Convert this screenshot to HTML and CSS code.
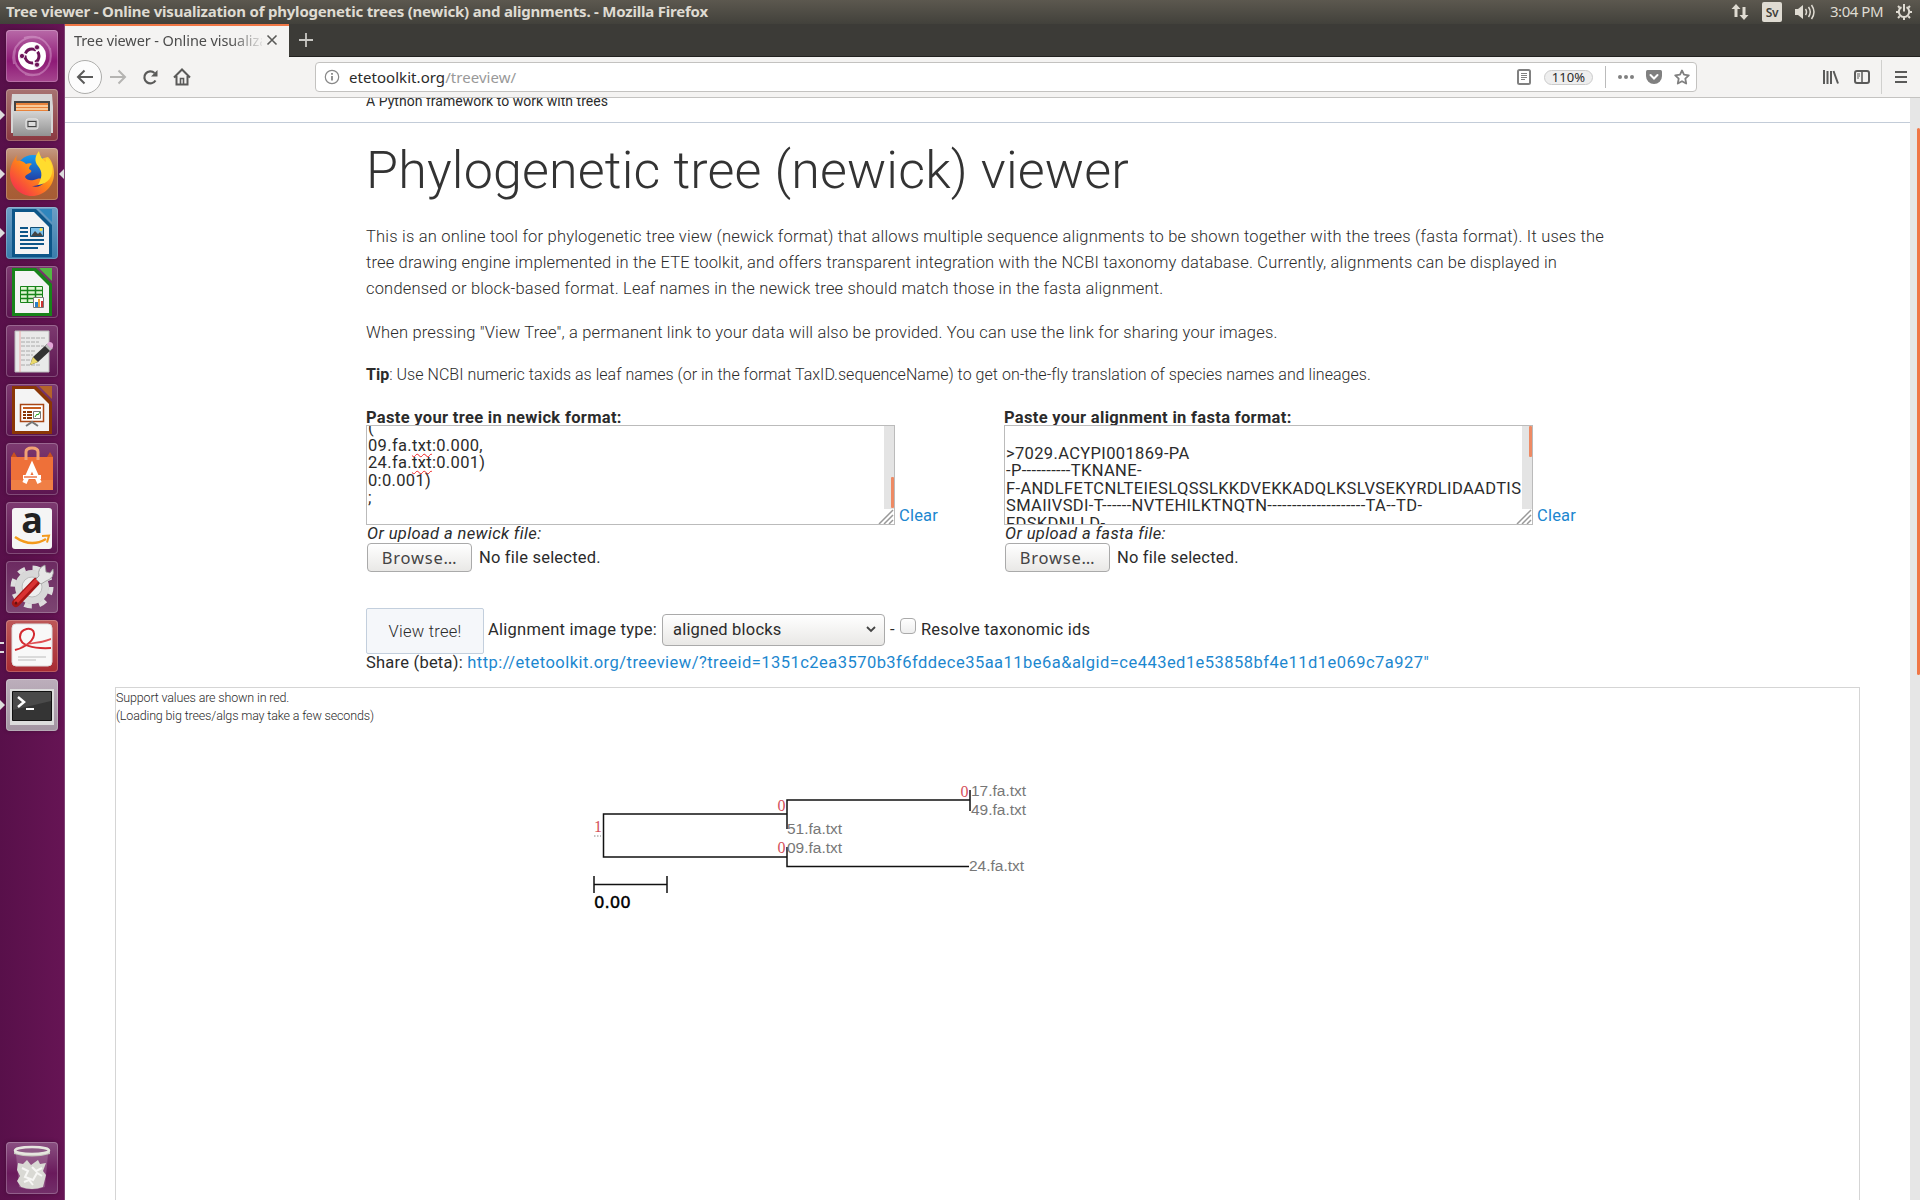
FILE: index.html
```html
<!DOCTYPE html>
<html lang="en">
<head>
<meta charset="utf-8">
<title>Tree viewer - Online visualization of phylogenetic trees (newick) and alignments.</title>
<link rel="stylesheet" href="styles.css">
</head>
<body>
<header class="panel">
  <span class="panel-title">Tree viewer - Online visualization of phylogenetic trees (newick) and alignments. - Mozilla Firefox</span>
  <div class="indicators">
    <svg class="net" width="18" height="18" viewBox="0 0 18 18"><path d="M5 1 9.500 6H6.500v8h-3V6H.5zM13 17 8.500 12h3V4h3v8h3z" fill="#dfdbd2"/></svg>
    <span class="kbd">Sv</span>
    <svg class="vol" width="20" height="18" viewBox="0 0 20 18"><path d="M0 6h3l5-4v14l-5-4H0z" fill="#dfdbd2"/><path d="M10.500 6q2 3 0 6M13.500 4q3.500 5 0 10M16.500 2q5 7 0 14" fill="none" stroke="#dfdbd2" stroke-width="1.500"/></svg>
    <span class="clock">3:04 PM</span>
    <svg class="gear" width="16" height="18" viewBox="0 0 16 18"><path d="M5.500 4.200a5.200 5.200 0 1 0 5 0" fill="none" stroke="#dfdbd2" stroke-width="2"/><path d="M8 1v7.500" stroke="#dfdbd2" stroke-width="2"/><path d="M3.700 4.700 2 3M12.300 4.700 14 3M2.500 9H0M16 9h-2.500M3.700 13.300 2 15M12.300 13.300 14 15M8 14.500V17" stroke="#dfdbd2" stroke-width="2"/></svg>
  </div>
</header>
<div class="desktop">
  <nav class="launcher">
    <div class="tile dash"><svg viewBox="0 0 52 52"><g fill="none" stroke="#e8bfe0" stroke-opacity=".4" stroke-width="2"><path d="M8 34C4 16 18 4 34 8M44 18c4 18-8 31-25 26M18 8c18-5 30 8 26 24M34 44C18 48 5 36 9 20"/></g><circle cx="26" cy="26" r="14" fill="#fff"/><circle cx="26" cy="26" r="7" fill="none" stroke="#6d1459" stroke-width="3" stroke-dasharray="12.700 2" stroke-dashoffset="5"/><g fill="#6d1459" stroke="#fff" stroke-width=".8"><circle cx="16" cy="26" r="2.600"/><circle cx="31" cy="17.300" r="2.600"/><circle cx="31" cy="34.700" r="2.600"/></g></svg></div>
    <div class="tile files run"><svg viewBox="0 0 52 52"><defs><linearGradient id="cab" x2="0" y2="1"><stop stop-color="#d4d4d4"/><stop offset="1" stop-color="#929292"/></linearGradient></defs><path d="M6 5h40l1 13v26H5V18z" fill="#d6d6d6"/><path d="M8 12h36v10H8z" fill="#444"/><path d="M10 14h32v8H10z" fill="#e8823a"/><path d="M10 17h32M10 20h32" stroke="#ffe2b8" stroke-width="1.500"/><path d="M7 22h38v25H7z" fill="url(#cab)"/><rect x="20" y="30" width="12" height="10" rx="2" fill="#bbb" stroke="#eee"/><rect x="22" y="32.500" width="8" height="5" fill="#ddd" stroke="#444"/></svg></div>
    <div class="tile firefox run active"><svg viewBox="0 0 52 52"><defs><linearGradient id="fx" x1="1" y1="0" x2="0" y2="1"><stop stop-color="#ffe53a"/><stop offset=".45" stop-color="#ff8a16"/><stop offset="1" stop-color="#f2195a"/></linearGradient><linearGradient id="globe" x2="0" y2="1"><stop stop-color="#159cf0"/><stop offset="1" stop-color="#25208c"/></linearGradient></defs><circle cx="27" cy="24" r="17" fill="url(#globe)"/><path d="M11 7c-1 3-1 4 0 6 4-1 7 1 9 3 2-1 5-1 6 0-2 1-3 3-3 5 2 1 3 2 2 3-2 2-5 2-6 5 2 4 7 4 12 2 3-1 5 0 6 1-2 5-7 6-11 6 8 3 16-4 16-14 0-6-5-9-8-13l8-2c4 4 6 10 6 17 0 12-10 22-22 22S4 38 4 26c0-8 3-13 7-19z" fill="url(#fx)"/><path d="M33 3c-4 5-5 10-1 15 5 6 4 12 0 19 10-1 16-9 14-19-1-5-4-7-6-8v4c-3-2-6-5-7-11z" fill="#ffdc2e"/></svg></div>
    <div class="tile writer run"><svg viewBox="0 0 52 52"><path d="M6 2h24l16 16v32H6z" fill="#0d5688"/><path d="M33 2h13v13z" fill="#2f86bd"/><path d="M9 5h19l15 15v27H9z" fill="#f4f4f4"/><path d="M14 21h8M14 25h8M14 29h8M14 33h24M14 37h24M14 41h18" stroke="#0d5688" stroke-width="2"/><path d="M24.500 20.500h13v9h-13z" fill="#7cc0e9" stroke="#124f75"/><path d="m25 29 4-5 3 3 2-2 3 4z" fill="#444"/><circle cx="35" cy="22.500" r="1.500" fill="#ffe040"/></svg></div>
    <div class="tile calc"><svg viewBox="0 0 52 52"><path d="M6 2h24l16 16v32H6z" fill="#18831a"/><path d="M33 2h13v13z" fill="#53b844"/><path d="M9 5h19l15 15v27H9z" fill="#f4f4f4"/><path d="M14.500 20.500h22v16h-22z" fill="#dff5d2" stroke="#18831a"/><path d="M14 24.500h22M14 28.500h22M14 32.500h22M21.500 20v16M29.500 20v16" stroke="#18831a" stroke-width="1.500"/><path d="M27.500 31.500h10v10h-10z" fill="#fff" stroke="#777"/><path d="M29 36h3v5h-3z" fill="#2880c8"/><path d="M32 33h2v8h-2z" fill="#f0a030"/><path d="M35 35h2v6h-2z" fill="#c33"/></svg></div>
    <div class="tile gedit"><svg viewBox="0 0 52 52"><path d="M9 6h34v41H9z" fill="#e9e9e9" stroke="#bbb"/><path d="M14 6v41" stroke="#e99" stroke-width=".8"/><path d="M15 13h24M15 17h18M15 21h23M15 26h14M15 30h12M15 35h12M15 40h20" stroke="#aaa" stroke-dasharray="4 1"/><path d="m24 40 3-8 14-13 5 5-14 13z" fill="#333"/><path d="m24 40 3-8 5 5z" fill="#ead96a"/><path d="m39 21 3-3 5 5-3 3z" fill="#bbb"/><path d="m41 19 2-2q5 0 4 5l-2 2z" fill="#e3a6d8"/></svg></div>
    <div class="tile impress"><svg viewBox="0 0 52 52"><path d="M6 2h24l16 16v32H6z" fill="#8a3606"/><path d="M33 2h13v13z" fill="#b4632a"/><path d="M9 5h19l15 15v27H9z" fill="#f4f4f4"/><path d="M14.500 20.500h23v17h-23z" fill="#fff" stroke="#a84614" stroke-width="1.500"/><path d="M17 24h18" stroke="#c65d20" stroke-width="2"/><path d="M17 28h3M17 31h3M17 34h3M21 28h5M21 31h5M21 34h5" stroke="#8a3606" stroke-width="2"/><path d="M27.500 27.500h7v7h-7z" fill="#fff" stroke="#777"/><path d="m29 33 2-3 1 1 2-3" stroke="#2a2" fill="none"/><path d="m20 42 6-4 6 4" fill="none" stroke="#777" stroke-width="2"/></svg></div>
    <div class="tile software"><svg viewBox="0 0 52 52"><path d="m8 9 3 5h30l3-5 3 5v33H5V14z" fill="#c9501f"/><path d="M5 14h42v23H5z" fill="#ee7039"/><path d="M5 37h42v10H5z" fill="#f07f45"/><path d="M20 17V9q0-4 6-4t6 4v8" fill="none" stroke="#f2a274" stroke-width="3"/><path d="m18.500 40 7.500-17 7.500 17" fill="none" stroke="#fff" stroke-width="4.500"/><path d="M17 34h18" stroke="#fff" stroke-width="4"/><path d="M18 34h13" stroke="#e9622c" stroke-width="1.300"/></svg></div>
    <div class="tile amazon"><svg viewBox="0 0 52 52"><rect x="6" y="6" width="40" height="41" rx="3" fill="#f5f5f5"/><text x="26" y="31" text-anchor="middle" class="amazon-a">a</text><path d="M9 35q16 11 31 2" fill="none" stroke="#f39a1c" stroke-width="2.500"/><path d="m36 34 7-.500-2 7" fill="none" stroke="#f39a1c" stroke-width="2"/></svg></div>
    <div class="tile settings"><svg viewBox="0 0 52 52"><circle cx="26" cy="26" r="19" fill="none" stroke="#ddd" stroke-width="5" stroke-dasharray="7.500 7.420"/><circle cx="26" cy="26" r="17" fill="#d8d8d8"/><circle cx="26" cy="26" r="10" fill="#eee" stroke="#bbb"/><path d="m10 42 20-21" stroke="#a61616" stroke-width="8" stroke-linecap="round"/><path d="m10 41 20-21" stroke="#d93232" stroke-width="4" stroke-linecap="round"/><path d="m30 18 3-3q-2-8 6-11l1 7 4 1 3-4q2 9-7 12l-5 3z" fill="#e6e6e6" stroke="#999" stroke-width=".8"/><circle cx="10" cy="42" r="1.500" fill="#611"/></svg></div>
    <div class="tile pdf run2"><svg viewBox="0 0 52 52"><rect x="6" y="4" width="40" height="42" rx="4" fill="#f8f8f8" stroke="#ddd"/><path d="M12 37h28M12 40h18" stroke="#bbb" stroke-width="1.200"/><path d="M9 30c12-3 20-11 19-17-1-7-14-5-14 4 0 8 12 12 31 11" fill="none" stroke="#d42a30" stroke-width="2"/><path d="M13 28c8-6 18-2 32-8v-2c-12 5-24 3-32 10z" fill="#e05054"/></svg></div>
    <div class="tile terminal run"><svg viewBox="0 0 52 52"><path d="M4 10h44v36H4z" fill="#dcdcdc"/><path d="M6.500 12.500h39v29h-39z" fill="#343434" stroke="#111"/><path d="M7 13h38v9L7 31z" fill="#4a4a4a"/><path d="m12 18 6 5-6 5" fill="none" stroke="#fff" stroke-width="2.500"/><path d="M20 30h8" stroke="#fff" stroke-width="2"/></svg></div>
    <div class="tile trash"><svg viewBox="0 0 52 52"><path d="m10 12 3 33q13 5 26 0l3-33z" fill="#c9a9c4" fill-opacity=".3"/><path d="m12 21 5 1 4-4 4 5 7-5 2 4 6-1-3 8 3 4-3 12q-11 4-22 0l-4-6 3-5-3-6z" fill="#d9d9d4"/><path d="m16 26 6 3-3 6 8 3 4-7 5 3M18 40l5-2 4 5M26 25l4 4 6-3" stroke="#f7f7f5" fill="none" stroke-width="2"/><path d="M8 9q18 8 36 0v3q-18 5-36 0z" fill="#c5c5bd"/><ellipse cx="26" cy="8.500" rx="17" ry="3.500" fill="#8d5a85" stroke="#e6e6df" stroke-width="2.500"/></svg></div>
  </nav>
  <div class="window">
    <div class="tabs">
      <div class="tab"><span class="tab-title">Tree viewer - Online visualization</span><svg width="12" height="12" viewBox="0 0 12 12"><path d="m1.500 1.500 9 9m0-9-9 9" stroke="#5a5a58" stroke-width="1.600"/></svg></div>
      <svg class="plus" width="14" height="14" viewBox="0 0 14 14"><path d="M7 0v14M0 7h14" stroke="#c9c8c4" stroke-width="1.800"/></svg>
    </div>
    <div class="toolbar">
      <div class="back"><svg width="18" height="16" viewBox="0 0 18 16"><path d="M17 8H2m6.500-6.500L2 8l6.500 6.500" fill="none" stroke="#5a5a59" stroke-width="2"/></svg></div>
      <svg class="fwd" width="18" height="16" viewBox="0 0 18 16"><path d="M1 8h15M9.500 1.500 16 8l-6.500 6.500" fill="none" stroke="#b5b4b2" stroke-width="2"/></svg>
      <svg class="reload" width="16" height="16" viewBox="0 0 16 16"><path d="M13.500 11.500A6 6 0 1 1 12.500 4" fill="none" stroke="#5a5a59" stroke-width="2.200"/><path d="M15.500 1v6.500H9z" fill="#5a5a59"/></svg>
      <svg class="home" width="18" height="18" viewBox="0 0 18 18"><path d="m1 9.500 8-8 8 8M3.500 8v8.500h11V8" fill="none" stroke="#5a5a59" stroke-width="2"/><path d="M7.500 16v-5.500h3V16" fill="none" stroke="#5a5a59" stroke-width="1.600"/></svg>
      <div class="urlbar">
        <svg class="info" width="16" height="16" viewBox="0 0 16 16"><circle cx="8" cy="8" r="6.700" fill="none" stroke="#888" stroke-width="1.200"/><path d="M8 7v4.500M8 4v1.700" stroke="#777" stroke-width="1.600"/></svg>
        <span class="url">etetoolkit.org<i>/treeview/</i></span>
        <svg class="reader" width="14" height="16" viewBox="0 0 14 16"><rect x="1" y="1" width="12" height="14" rx="1.500" fill="none" stroke="#808080" stroke-width="2"/><path d="M4 4.500h6M4 6.500h6M4 8.500h6M4 10.500h4" stroke="#808080"/></svg>
        <span class="zoom">110%</span>
        <i class="sep"></i>
        <svg class="dots" width="16" height="4" viewBox="0 0 16 4"><circle cx="2" cy="2" r="2"/><circle cx="8" cy="2" r="2"/><circle cx="14" cy="2" r="2"/></svg>
        <svg class="pocket" width="16" height="14" viewBox="0 0 16 14"><path d="M1.500 0h13Q16 0 16 1.500V6a8 8 0 0 1-16 0V1.500Q0 0 1.500 0z" fill="#808080"/><path d="m4.500 5 3.500 3.500L11.500 5" fill="none" stroke="#fff" stroke-width="2" stroke-linecap="round"/></svg>
        <svg class="star" width="16" height="16" viewBox="0 0 16 16"><path d="m8 1.500 2 4.200 4.800.6-3.500 3.300.9 4.900L8 12.200l-4.200 2.300.9-4.900L1.200 6.300 6 5.700z" fill="none" stroke="#808080" stroke-width="1.800" stroke-linejoin="round"/></svg>
      </div>
      <svg class="library" width="16" height="14" viewBox="0 0 16 14"><path d="M1 0v14M4.500 1v13M8 1v13M10.500 1l4.500 12.500" stroke="#5a5a59" stroke-width="2" fill="none"/></svg>
      <svg class="sidebar" width="16" height="14" viewBox="0 0 16 14"><rect x="1" y="1" width="14" height="12" rx="2" fill="none" stroke="#5a5a59" stroke-width="2"/><path d="M8 1v12" stroke="#5a5a59" stroke-width="1.500"/><path d="M3 4h3M3 6h3M3 8h2" stroke="#5a5a59"/></svg>
      <i class="sep tall"></i>
      <svg class="menu" width="12" height="12" viewBox="0 0 12 12"><path d="M0 1h12M0 6h12M0 11h12" stroke="#5a5a59" stroke-width="2"/></svg>
    </div>
    <div class="viewport">
      <main class="page">
        <div class="site-head">A Python framework to work with trees</div>
        <div class="content">
          <h1>Phylogenetic tree (newick) viewer</h1>
          <p class="intro"><span class="wide">This is an online tool for phylogenetic tree view (newick format) that allows multiple sequence alignments to be shown together with the trees (fasta format). It uses the</span><br>tree drawing engine implemented in the ETE toolkit, and offers transparent integration with the NCBI taxonomy database. Currently, alignments can be displayed in<br><span class="mid">condensed or block-based format. Leaf names in the newick tree should match those in the fasta alignment.</span></p>
          <p class="intro mid">When pressing "View Tree", a permanent link to your data will also be provided. You can use the link for sharing your images.</p>
          <p class="tip"><b>Tip</b>: Use NCBI numeric taxids as leaf names (or in the format TaxID.sequenceName) to get on-the-fly translation of species names and lineages.</p>
          <div class="inputs">
            <section class="col">
              <label>Paste your tree in newick format:</label>
              <div class="area-row">
                <div class="area newick"><div class="lines">(<br>09.fa.<u>txt</u>:0.000,<br>24.fa.<u>txt</u>:0.001)<br>0:0.001)<br>;</div><i class="track"></i><i class="thumb"></i><svg class="grip" width="16" height="15" viewBox="0 0 16 15"><path d="M1 15 15 1M6 15l9-9M11 15l4-4" stroke="#999" stroke-width="1.500"/></svg></div>
                <a>Clear</a>
              </div>
              <em>Or upload a newick file:</em>
              <div class="file"><span class="browse">Browse…</span><span>No file selected.</span></div>
            </section>
            <section class="col">
              <label>Paste your alignment in fasta format:</label>
              <div class="area-row">
                <div class="area fasta"><div class="lines"><br>&gt;7029.ACYPI001869-PA<br>-P----------TKNANE-<br>F-ANDLFETCNLTEIESLQSSLKKDVEKKADQLKSLVSEKYRDLIDAADTIS<br>SMAIIVSDI-T------NVTEHILKTNQTN--------------------TA--TD-<br>FDSKDNLLD-</div><i class="track"></i><i class="thumb"></i><svg class="grip" width="16" height="15" viewBox="0 0 16 15"><path d="M1 15 15 1M6 15l9-9M11 15l4-4" stroke="#999" stroke-width="1.500"/></svg></div>
                <a>Clear</a>
              </div>
              <em>Or upload a fasta file:</em>
              <div class="file"><span class="browse">Browse…</span><span>No file selected.</span></div>
            </section>
          </div>
          <div class="actions">
            <span class="view">View tree!</span>
            <span class="kind">Alignment image type:</span>
            <span class="select">aligned blocks<svg width="10" height="7" viewBox="0 0 10 7"><path d="m1 1 4 4 4-4" fill="none" stroke="#444" stroke-width="1.800"/></svg></span>
            <span class="dash-sep">-</span>
            <i class="check"></i>
            <span class="resolve">Resolve taxonomic ids</span>
          </div>
          <div class="share">Share (beta): <a>http://etetoolkit.org/treeview/?treeid=1351c2ea3570b3f6fddece35aa11be6a&amp;algid=ce443ed1e53858bf4e11d1e069c7a927"</a></div>
        </div>
        <div class="result">
          <div class="notes">Support values are shown in red.<br>(Loading big trees/algs may take a few seconds)</div>
          <svg class="tree" width="480" height="160" viewBox="570 760 480 160">
            <path class="branch" d="M787 814H603.500V857H787M787 829V800H970M970 790V811M787 847V866.500H969M594 884.500H667M594 876V893M667 876V893"/>
            <path d="M594 836h7" stroke="#888" stroke-dasharray="1.500 1.500"/>
            <g class="leaf"><text x="971" y="796">17.fa.txt</text><text x="971" y="815">49.fa.txt</text><text x="787" y="834">51.fa.txt</text><text x="787" y="853">09.fa.txt</text><text x="969" y="871">24.fa.txt</text></g>
            <g class="support"><text x="960.500" y="797">0</text><text x="777.500" y="811">0</text><text x="777.500" y="853">0</text><text x="594" y="832">1</text></g>
            <text class="scale" x="594" y="908">0.00</text>
          </svg>
        </div>
      </main>
      <div class="scroll"><i></i></div>
    </div>
  </div>
</div>
</body>
</html>
```
FILE: styles.css
```css
* { box-sizing: border-box; }
body { margin: 0; width: 1920px; height: 1200px; overflow: hidden; background: #fff; color: #2b2b2b; font: 16.5px/18px Roboto, sans-serif; letter-spacing: .2px; }
i { display: block; font-style: normal; }
svg { display: block; flex: none; }
a { color: #1c87cf; }

.panel { height: 24px; display: flex; justify-content: space-between; align-items: center; padding: 0 8px 0 6px; background: linear-gradient(#5c584f, #42413b); color: #dfdbd2; font: 15px/24px "Noto Sans", sans-serif; letter-spacing: -.208px; white-space: nowrap; }
.panel-title { height: 24px; line-height: 23px; font-weight: 700; }
.indicators { display: flex; align-items: center; }
.kbd { width: 20px; height: 20px; margin: 0 13px; border-radius: 2px; background: #dfdbd2; color: #3f3e39; font: 600 12px/21px "Noto Sans", sans-serif; text-align: center; }
.clock { width: 53px; height: 24px; margin: 0 13px 0 15px; line-height: 23px; letter-spacing: -.47px; }

.desktop { display: flex; height: 1176px; }
.launcher { width: 65px; padding: 6px 0 6px 6px; display: flex; flex-direction: column; gap: 7px; background: linear-gradient(90deg, #58104a, #661454); border-right: 1px solid #7e4474; }
.tile { position: relative; width: 52px; height: 52px; border-radius: 4px; background: linear-gradient(#7d3a70, #5c1550); box-shadow: inset 0 0 0 1px #ffffff3a, 0 0 4px #0004; }
.tile svg { width: 52px; height: 52px; }
.dash { background: linear-gradient(#b86aa8, #8e1a76 60%, #a6468f); }
.files { background: linear-gradient(#a77371, #8a3840); }
.firefox { background: linear-gradient(#c59a83, #ab6238 50%, #a65c35); }
.writer { background: linear-gradient(#6d9fc5, #387cab); }
.pdf { background: linear-gradient(#bd5858, #a82b32); }
.terminal { background: linear-gradient(#bcaebb, #a294a1); }
.settings { background: linear-gradient(#6c2a61, #7c4572); }
.trash { margin-top: auto; background: linear-gradient(#8a5081, #6a1a5c 60%, #73306a); }
.run::before, .active::after { content: ""; position: absolute; left: -6px; top: 21px; border: 5px solid transparent; border-left-color: #ddd; border-right-width: 0; }
.active::after { left: auto; right: -6px; border-left-width: 0; border-right: 5px solid #ddd; }
.run2::before { content: ""; position: absolute; left: -6px; top: 22px; width: 4px; height: 7px; border: solid #ddd; border-width: 2.500px 0; }
.amazon-a { font: 700 36px "Open Sans", sans-serif; letter-spacing: 0; fill: #222; }

.window { width: 1855px; }
.tabs { height: 33px; display: flex; align-items: center; background: #3c3b37; border-bottom: 1px solid #22211f; }
.tab { width: 224px; height: 33px; margin-bottom: -1px; padding: 0 11px 3px 9px; display: flex; align-items: center; border-top: 2px solid #f07746; background: #f4f3f2; color: #4c4c4c; font: 14.500px/20px "Noto Sans", sans-serif; letter-spacing: -.1px; }
.tab-title { width: 188px; margin-right: 4px; overflow: hidden; white-space: nowrap; -webkit-mask-image: linear-gradient(90deg, #000 155px, transparent 192px); mask-image: linear-gradient(90deg, #000 155px, transparent 192px); }
.plus { margin-left: 10px; }
.toolbar { height: 41px; display: flex; align-items: center; padding-left: 3px; background: #f4f3f2; border-bottom: 1px solid #c4c3c1; }
.back { width: 34px; height: 34px; display: grid; place-items: center; border: 1px solid #adadab; border-radius: 50%; background: #fcfcfc; }
.fwd { margin-left: 7px; }
.reload { margin-left: 15px; }
.home { margin-left: 15px; }
.urlbar { width: 1382px; height: 30px; margin-left: 124px; padding: 0 6px 0 8px; display: flex; align-items: center; border: 1px solid #c3c2c0; border-radius: 4px; background: #fff; font: 15px/20px "Noto Sans", sans-serif; letter-spacing: .05px; color: #2a2a2a; }
.url { margin: 0 auto 0 9px; }
.url i { display: inline; color: #999; }
.zoom { width: 49px; height: 15px; margin-left: 13px; border: 1px solid #ccc; border-radius: 8px; background: #eee; font: 13px/13px "Noto Sans", sans-serif; text-align: center; }
.sep { width: 1px; height: 22px; margin: 0 12px; background: #bbb; }
.dots { fill: #808080; }
.pocket, .star { margin-left: 12px; }
.library { margin-left: 126px; }
.sidebar { margin-left: 15px; }
.sep.tall { height: 34px; margin: 0 13px 0 11px; background: #d0d0ce; }

.viewport { height: 1102px; display: flex; }
.page { width: 1845px; height: 1102px; overflow: hidden; }
.site-head { height: 25px; padding-left: 301px; border-bottom: 1px solid #c3ccd8; font-size: 14px; line-height: 6px; letter-spacing: .033px; }
.scroll { width: 10px; padding: 30px 0 0 7px; background: #e6e6e6; }
.scroll i { height: 547px; background: #f07746; border-radius: 2px; }
.content { padding-left: 301px; }
h1 { margin: 18px 0 23px; font-size: 52px; line-height: 60px; font-weight: 300; letter-spacing: .162px; white-space: nowrap; color: #333; }
p { margin: 0 0 18px; font-size: 16.500px; line-height: 26px; font-weight: 300; letter-spacing: .159px; white-space: nowrap; }
.wide { letter-spacing: .203px; }
.mid { letter-spacing: .183px; }
.tip { margin: -2px 0 21px; font-size: 16px; letter-spacing: .03px; }
b { font-weight: 700; }
.inputs { display: flex; }
.col { width: 638px; }
label { display: block; height: 16px; line-height: 17px; font-weight: 700; letter-spacing: .32px; }
.area-row { display: flex; align-items: flex-end; gap: 4px; }
.area { position: relative; width: 529px; height: 100px; border: 1px solid #bbb; overflow: hidden; padding-left: 1px; white-space: nowrap; line-height: 17.600px; letter-spacing: .33px; }
.fasta { letter-spacing: .35px; }
.newick .lines { margin-top: -7px; }
.fasta .lines { margin-top: 1px; }
u { text-decoration: underline wavy #e22 1px; text-underline-offset: 2px; }
.track { position: absolute; right: 0; top: 0; width: 10px; height: 83px; background: #e4e4e4; }
.thumb { position: absolute; right: 0; top: 51px; width: 3px; height: 31px; background: #ee8a64; border-radius: 1px; }
.fasta .thumb { top: 0; }
.grip { position: absolute; right: 0; bottom: 0; }
em { display: block; height: 18px; padding-left: 1px; letter-spacing: .38px; }
.file { display: flex; align-items: center; gap: 7px; padding-left: 1px; height: 29px; line-height: 20px; }
.browse { width: 105px; height: 29px; border: 1px solid #aaa; border-radius: 4px; background: linear-gradient(#fff, #e9e8e6); font: 16.500px/27px "Noto Sans", sans-serif; letter-spacing: .8px; text-align: center; color: #444; }
.actions { display: flex; align-items: center; height: 46px; margin-top: 36px; white-space: nowrap; }
.view { width: 118px; height: 46px; margin-right: 4px; border: 1px solid #c3cfdd; border-radius: 2px; background: #f5f7fa; font-weight: 300; line-height: 45px; letter-spacing: .25px; text-align: center; }
.kind { width: 174px; margin-top: -3px; letter-spacing: .249px; }
.select { width: 223px; height: 32px; margin-top: -3px; padding: 0 8px 0 10px; display: flex; align-items: center; justify-content: space-between; border: 1px solid #aaa; border-radius: 4px; background: linear-gradient(#fff, #e9e8e6); }
.dash-sep { width: 10px; margin: -3px 0 0 5px; }
.check { width: 16px; height: 16px; margin: -10px 5px 0 0; border: 1px solid #aaa; border-radius: 4px; background: linear-gradient(#fff, #eee); }
.resolve { margin-top: -3px; }
.share { white-space: nowrap; letter-spacing: .23px; }
.share a { letter-spacing: .469px; }
.result { width: 1745px; height: 540px; margin: 15px 0 0 50px; border: 1px solid #d5d5d5; font-size: 12.500px; font-weight: 300; line-height: 18px; letter-spacing: -.15px; }
.notes { padding-top: 1px; height: 36px; }
.tree { margin: 36px 0 0 454px; letter-spacing: 0; }
.branch { fill: none; stroke: #111; stroke-width: 1.500; }
.leaf { font: 15.500px "Liberation Sans", sans-serif; fill: #777; }
.support { font: 16px "Liberation Serif", serif; fill: #d4505a; }
.scale { font: 16.500px "DejaVu Sans", sans-serif; fill: #000; stroke: #000; stroke-width: .4; }
```
